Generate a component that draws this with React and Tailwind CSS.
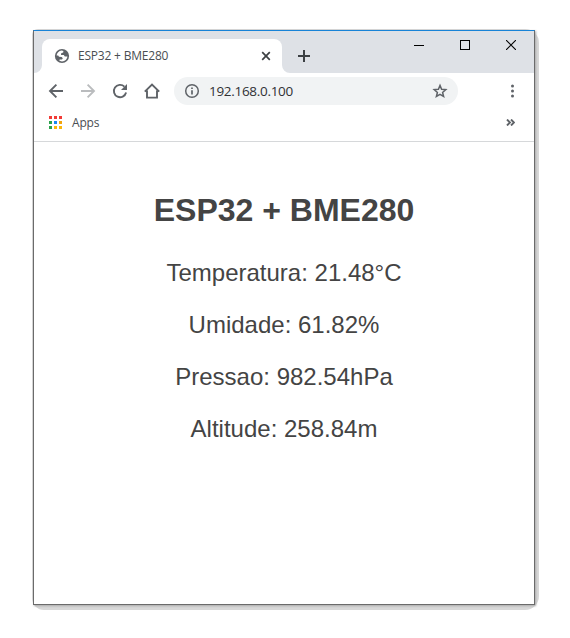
import React from "react";

const UI_FONT = "font-['Open_Sans','Noto_Sans',sans-serif]";

function Globe() {
  return (
    <svg width="16" height="16" viewBox="0 0 16 16" className="shrink-0">
      <circle cx="8" cy="8" r="7.1" fill="#5f6368" />
      <path
        d="M2.6 7.6 C2.8 5 4.9 2.9 7.6 2.6 L9.4 3 L9.2 4.4 L7.2 5.2 L7 7 L9.8 7.1 L10.8 8.6 L13.4 8.4 C13.2 11 11 13.3 8 13.4 L5.4 12.8 L5.6 11.6 L8 11.4 L8.8 10.2 L7.6 9 L5 8.8 L4.2 7.6 Z"
        fill="#fff"
      />
    </svg>
  );
}

function TabStrip() {
  return (
    <div className="flex h-[42px] bg-[#dee1e6]">
      <svg width="8" height="8" className="mt-[34px] shrink-0">
        <path d="M8 0 V8 H0 A8 8 0 0 0 8 0 Z" fill="#fff" />
      </svg>
      <div className="mt-2 flex h-[34px] w-[240px] shrink-0 items-center rounded-t-lg bg-white pl-3 pr-[11px]">
        <Globe />
        <span className={`ml-2 text-[12px] leading-4 tracking-[-0.2px] whitespace-nowrap text-[#4a4e52] ${UI_FONT}`}>
          ESP32 + BME280
        </span>
        <svg width="10" height="10" viewBox="0 0 10 10" className="ml-auto shrink-0">
          <path d="M1.2 1.2 L8.8 8.8 M8.8 1.2 L1.2 8.8" stroke="#3c4043" strokeWidth="1.7" />
        </svg>
      </div>
      <svg width="8" height="8" className="mt-[34px] shrink-0">
        <path d="M0 0 V8 H8 A8 8 0 0 1 0 0 Z" fill="#fff" />
      </svg>
      <svg width="12" height="12" className="mt-[19px] ml-2 shrink-0">
        <path d="M6 0 V12 M0 6 H12" stroke="#3c4043" strokeWidth="2" />
      </svg>
      <div className="ml-auto flex gap-9 pt-[9px] pr-[18px]">
        <svg width="10" height="10" shapeRendering="crispEdges">
          <path d="M0 5.5 H10" stroke="#000" />
        </svg>
        <svg width="10" height="10" shapeRendering="crispEdges">
          <rect x="0.5" y="0.5" width="9" height="9" fill="none" stroke="#000" />
        </svg>
        <svg width="10" height="10">
          <path d="M0 0 L10 10 M10 0 L0 10" stroke="#000" strokeWidth="1.1" />
        </svg>
      </div>
    </div>
  );
}

function Toolbar() {
  return (
    <div className="flex h-9 items-center pl-[14px]">
      <div className="flex items-center gap-4">
        <svg width="16" height="16" viewBox="0 0 16 16">
          <path d="M15 8 H2.4 M8.4 1.6 L2 8 L8.4 14.4" fill="none" stroke="#5f6368" strokeWidth="1.9" />
        </svg>
        <svg width="16" height="16" viewBox="0 0 16 16">
          <path d="M1 8 H13.6 M7.6 1.6 L14 8 L7.6 14.4" fill="none" stroke="#babcbe" strokeWidth="1.9" />
        </svg>
        <svg width="16" height="16" viewBox="0 0 16 16">
          <path d="M14.1 9.6 A6.2 6.2 0 1 1 12.4 3.6" fill="none" stroke="#5f6368" strokeWidth="1.9" />
          <path d="M15 1 V7 H9 Z" fill="#5f6368" />
        </svg>
        <svg width="16" height="16" viewBox="0 0 16 16">
          <path d="M0.8 8.6 L8 1.6 L15.2 8.6 M3 7.6 V14.6 H13 V7.6" fill="none" stroke="#5f6368" strokeWidth="1.9" />
        </svg>
      </div>
      <div className="ml-[14px] flex h-7 w-[284px] items-center rounded-full bg-[#f1f3f4] pr-[10px] pl-[10px]">
        <svg width="16" height="16" viewBox="0 0 16 16">
          <circle cx="8" cy="8" r="6.3" fill="none" stroke="#5f6368" strokeWidth="1.5" />
          <path d="M8 7.2 V11.6 M8 4.4 V6" stroke="#5f6368" strokeWidth="1.7" />
        </svg>
        <span className={`ml-[9px] text-[13.5px] leading-4 tracking-[-0.3px] text-[#303134] ${UI_FONT}`}>
          192.168.0.100
        </span>
        <svg width="16" height="16" viewBox="0 0 16 16" className="ml-auto">
          <path
            d="M8 2.4 L9.6 6.2 L13.8 6.6 L10.6 9.4 L11.6 13.5 L8 11.3 L4.4 13.5 L5.4 9.4 L2.2 6.6 L6.4 6.2 Z"
            fill="none"
            stroke="#5f6368"
            strokeWidth="1.5"
          />
        </svg>
      </div>
      <svg width="4" height="14" viewBox="0 0 4 14" className="mr-5 ml-auto">
        <g fill="#5f6368">
          <circle cx="2.5" cy="2" r="1.5" />
          <circle cx="2.5" cy="7" r="1.5" />
          <circle cx="2.5" cy="12" r="1.5" />
        </g>
      </svg>
    </div>
  );
}

const APP_DOTS = ["#f23b36", "#f23b36", "#f23b36", "#2ba24c", "#1a86f2", "#f2a40a", "#2ba24c", "#fbb60a", "#fbb60a"];

function BookmarkBar() {
  return (
    <div className="flex h-[33px] items-center border-b border-[#d6d8da] pr-[19px] pb-[5px] pl-[15px]">
      <svg width="13" height="13" shapeRendering="crispEdges" className="mt-[-1px]">
        {APP_DOTS.map((color, i) => (
          <rect key={i} x={(i % 3) * 5} y={Math.floor(i / 3) * 5} width="3" height="3" fill={color} />
        ))}
      </svg>
      <span className={`ml-[10px] text-[12px] leading-4 tracking-[-0.2px] text-[#4a4e52] ${UI_FONT}`}>Apps</span>
      <svg width="9" height="7" viewBox="0 0 9 7" className="ml-auto">
        <path d="M1 0.5 L4 3.5 L1 6.5 M5 0.5 L8 3.5 L5 6.5" fill="none" stroke="#5f6368" strokeWidth="1.9" />
      </svg>
    </div>
  );
}

const READINGS = ["Temperatura: 21.48°C", "Umidade: 61.82%", "Pressao: 982.54hPa", "Altitude: 258.84m"];

export default function App() {
  return (
    <div className="h-[638px] w-[570px] overflow-hidden bg-white pt-[29px] pl-8">
      <div className="h-[581px] w-[507px] rounded-tl-[6px] rounded-tr-[14px] rounded-br-[14px] rounded-bl-[12px] bg-[#d8d8d8] pt-px pl-px">
        <div className="flex h-[575px] w-[502px] flex-col border border-[#6b6b6b] border-t-[#1883d7] bg-white shadow-[1px_1px_2px_#aaaaaa]">
          <TabStrip />
          <Toolbar />
          <BookmarkBar />
          <main className="flex flex-1 flex-col items-center pt-[50px] font-['Liberation_Sans',Arial,sans-serif] text-[#444444]">
            <h1 className="mb-[30px] text-[32px] leading-[37px] font-bold">ESP32 + BME280</h1>
            <div className="flex flex-col items-center gap-6 text-2xl leading-7">
              {READINGS.map((reading) => (
                <p key={reading}>{reading}</p>
              ))}
            </div>
          </main>
        </div>
      </div>
    </div>
  );
}
